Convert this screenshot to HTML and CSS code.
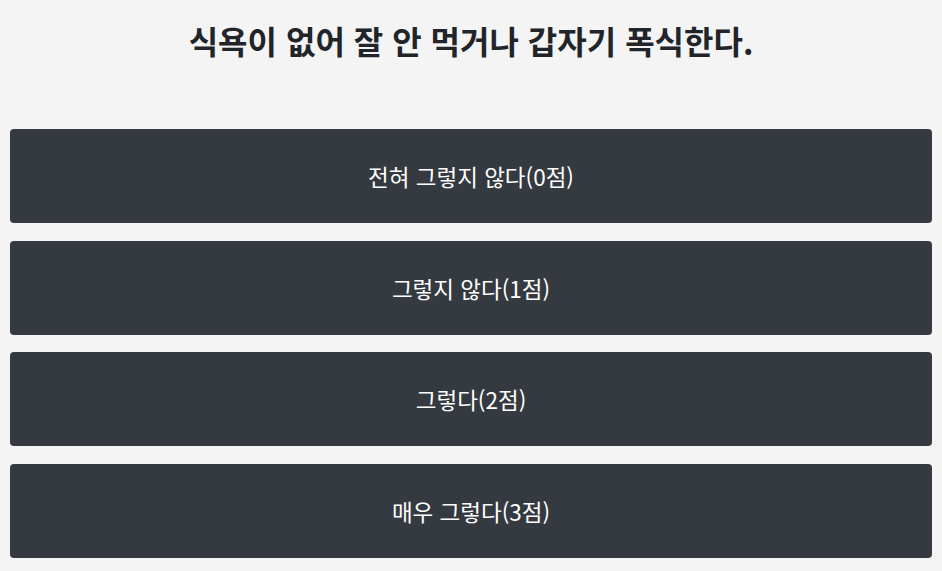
FILE: index.html
```html
<!DOCTYPE html>
<html lang="ko">
<head>
    <meta charset="UTF-8">
    <meta name="viewport" content="width=device-width, initial-scale=1.0">
    <title>설문</title>
    <link rel="stylesheet" href="styles.css">
</head>
<body>
    <div class="quiz">
        <h1 class="question">식욕이 없어 잘 안 먹거나 갑자기 폭식한다.</h1>

        <div class="answers">
            <button type="button" class="answer">전혀 그렇지 않다(0점)</button>
            <button type="button" class="answer">그렇지 않다(1점)</button>
            <button type="button" class="answer">그렇다(2점)</button>
            <button type="button" class="answer">매우 그렇다(3점)</button>
        </div>
    </div>
</body>
</html>
```

FILE: styles.css
```css
body {
    font-family: "Noto Sans CJK KR", "Noto Sans", sans-serif;
    background-color: #f4f4f4;
    color: #212529;
    margin: 0;
    padding: 0 10px;
}

.question {
    font-size: 32px;
    font-weight: bold;
    text-align: center;
    margin: 0;
    padding-top: 18px;
    line-height: 44px;
    height: 129px;
    box-sizing: border-box;
}

.answers {
    display: flex;
    flex-direction: column;
    gap: 17.5px;
}

.answer {
    height: 94px;
    width: 100%;
    border: none;
    border-radius: 4px;
    background-color: #343a40;
    color: #fff;
    font-family: inherit;
    font-size: 22.5px;
    cursor: pointer;
}

.answer:hover {
    background-color: #23272b;
}
```
